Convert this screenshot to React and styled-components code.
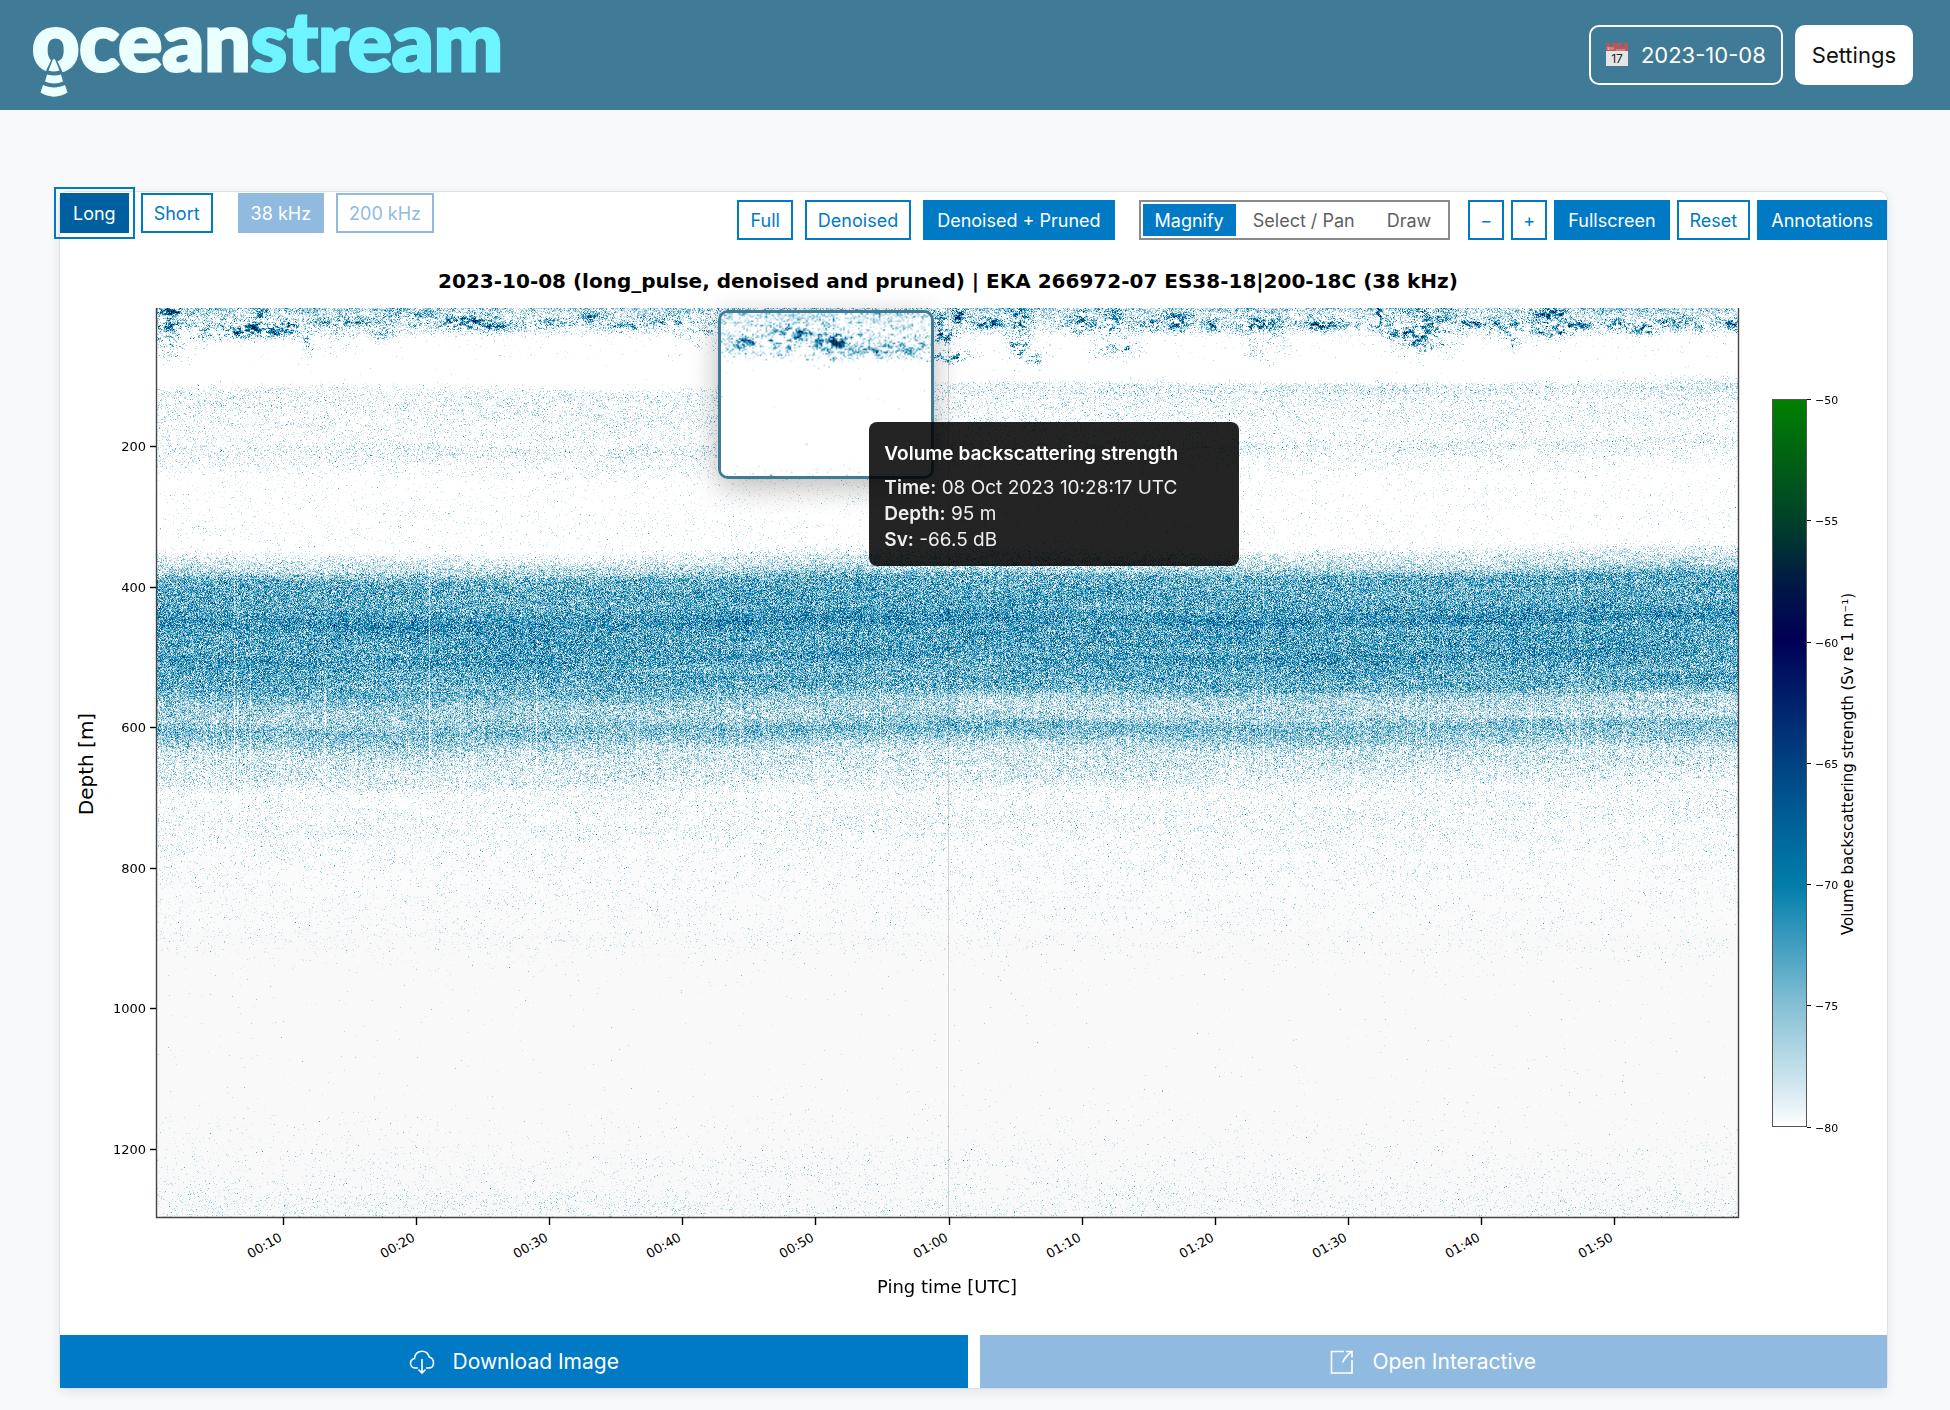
import React, { useEffect, useRef } from "react";
import styled, { createGlobalStyle } from "styled-components";

const COLORS = {
  header: "#3f7a96",
  blue: "#007ac5",
  blueDark: "#005f9e",
  blueLight: "#90badf",
  page: "#f8f9fb",
  grey: "#8a8a8a",
};

// ---------- echogram data ----------

const PLOT = { width: 1582, height: 909 };

const COLOR_STOPS = [
  [0, 255, 255, 255],
  [0.05, 214, 233, 241],
  [0.17, 130, 190, 212],
  [0.25, 64, 158, 192],
  [0.33, 2, 126, 170],
  [0.4, 0, 102, 156],
  [0.5, 0, 66, 130],
  [0.67, 0, 0, 85],
  [0.75, 0, 26, 68],
  [0.83, 0, 64, 42],
  [1, 0, 128, 0],
];

// mean level by depth in plot pixels
const LEVELS = [
  [0, 0.1],
  [6, 0.02],
  [18, -0.05],
  [24, -0.08],
  [32, -0.22],
  [48, -0.24],
  [60, -0.3],
  [70, -0.28],
  [78, -0.08],
  [86, -0.06],
  [110, -0.08],
  [132, -0.1],
  [140, -0.05],
  [152, -0.1],
  [164, -0.12],
  [172, -0.17],
  [210, -0.16],
  [238, -0.17],
  [248, -0.02],
  [262, 0.08],
  [270, 0.2],
  [290, 0.22],
  [300, 0.22],
  [314, 0.29],
  [322, 0.24],
  [342, 0.23],
  [350, 0.26],
  [358, 0.22],
  [382, 0.2],
  [395, 0.12],
  [410, 0.11],
  [420, 0.18],
  [430, 0.14],
  [445, 0.04],
  [470, 0],
  [485, -0.08],
  [520, -0.07],
  [535, -0.11],
  [580, -0.14],
  [640, -0.16],
  [655, -0.22],
  [700, -0.27],
  [780, -0.25],
  [840, -0.17],
  [890, -0.12],
  [909, -0.1],
];

// fish schools near the surface: x, y, half width, half height, strength
const SCHOOLS = [
  [12, 22, 22, 14, 0.3],
  [18, 42, 12, 10, 0.2],
  [16, 3, 9, 3, 0.6],
  [52, 22, 14, 6, 0.36],
  [66, 26, 10, 4, 0.3],
  [96, 21, 32, 6, 0.48],
  [107, 10, 4, 8, 0.42],
  [130, 18, 12, 4, 0.36],
  [150, 34, 4, 12, 0.24],
  [182, 33, 9, 8, 0.2],
  [190, 14, 26, 3, 0.34],
  [226, 22, 9, 8, 0.2],
  [255, 9, 18, 5, 0.24],
  [310, 14, 20, 5, 0.4],
  [338, 18, 16, 4, 0.32],
  [390, 15, 18, 3, 0.3],
  [436, 10, 10, 4, 0.26],
  [470, 18, 20, 3, 0.26],
  [510, 14, 18, 4, 0.3],
  [600, 24, 40, 10, 0.3],
  [700, 22, 30, 8, 0.26],
  [785, 24, 10, 10, 0.42],
  [792, 48, 16, 5, 0.44],
  [803, 8, 5, 8, 0.34],
  [832, 15, 14, 4, 0.42],
  [862, 12, 7, 8, 0.44],
  [862, 38, 9, 12, 0.36],
  [874, 50, 9, 7, 0.44],
  [926, 14, 3, 8, 0.95],
  [926, 17, 14, 5, 0.34],
  [954, 18, 8, 12, 0.36],
  [962, 38, 14, 8, 0.38],
  [990, 16, 14, 4, 0.28],
  [1019, 14, 10, 6, 0.44],
  [1057, 17, 8, 4, 0.4],
  [1103, 17, 14, 7, 0.4],
  [1110, 38, 14, 10, 0.18],
  [1164, 16, 14, 4, 0.44],
  [1190, 18, 26, 2, 0.3],
  [1223, 10, 2, 8, 0.95],
  [1248, 22, 14, 7, 0.44],
  [1266, 26, 20, 14, 0.38],
  [1260, 44, 8, 6, 0.24],
  [1274, 8, 18, 8, 0.24],
  [1318, 15, 22, 3, 0.38],
  [1358, 22, 14, 7, 0.36],
  [1357, 34, 5, 6, 0.32],
  [1396, 20, 14, 7, 0.48],
  [1394, 6, 10, 6, 0.42],
  [1418, 17, 12, 3, 0.44],
  [1462, 17, 10, 4, 0.4],
  [1488, 20, 10, 4, 0.5],
  [1515, 14, 14, 5, 0.38],
  [1548, 18, 10, 3, 0.26],
  [1576, 16, 8, 4, 0.32],
];

const LENS_LEVELS = [
  [0, 0.04],
  [14, -0.04],
  [30, -0.08],
  [44, -0.12],
  [52, -0.24],
  [60, -0.28],
  [90, -0.27],
  [108, -0.32],
  [145, -0.33],
  [154, -0.18],
  [166, -0.14],
];

const LENS_SCHOOLS = [
  [30, 31, 16, 5, 0.36],
  [52, 30, 12, 7, 0.52],
  [62, 20, 9, 5, 0.6],
  [70, 25, 8, 3, 0.5],
  [90, 19, 12, 2, 0.6],
  [100, 27, 7, 9, 0.36],
  [114, 30, 9, 7, 0.5],
  [104, 44, 10, 6, 0.3],
  [137, 26, 8, 4, 0.44],
  [150, 36, 22, 5, 0.3],
  [190, 34, 20, 6, 0.28],
];

function makeRandom(seed) {
  let a = seed;
  return () => {
    a = (a + 0x6d2b79f5) | 0;
    let t = Math.imul(a ^ (a >>> 15), 1 | a);
    t = (t + Math.imul(t ^ (t >>> 7), 61 | t)) ^ t;
    return ((t ^ (t >>> 14)) >>> 0) / 4294967296;
  };
}

function ramp(stops, v) {
  if (v <= stops[0][0]) return stops[0].slice(1);
  for (let i = 1; i < stops.length; i++) {
    if (v <= stops[i][0]) {
      const [a, ...from] = stops[i - 1];
      const [b, ...to] = stops[i];
      const k = (v - a) / (b - a);
      return from.map((f, j) => f + (to[j] - f) * k);
    }
  }
  return stops[stops.length - 1].slice(1);
}

const PALETTE = Array.from({ length: 256 }, (_, i) => ramp(COLOR_STOPS, i / 255));

// smooth 2d noise with cells of cw x ch pixels
function makeBlotches(random, width, height, cw, ch) {
  const cols = Math.ceil(width / cw) + 2;
  const rows = Math.ceil(height / ch) + 2;
  const grid = Array.from({ length: cols * rows }, () => random() * 2 - 1);
  return (x, y) => {
    const gx = Math.floor(x / cw);
    const gy = Math.floor(y / ch);
    const fx = x / cw - gx;
    const fy = y / ch - gy;
    const i = gy * cols + gx;
    const top = grid[i] + (grid[i + 1] - grid[i]) * fx;
    const low = grid[i + cols] + (grid[i + cols + 1] - grid[i + cols]) * fx;
    return top + (low - top) * fy;
  };
}

function paint(canvas, { levels, schools, scale, seed, bands }) {
  const { width, height } = canvas;
  const ctx = canvas.getContext("2d");
  const image = ctx.createImageData(width, height);
  const random = makeRandom(seed);
  const fine = makeBlotches(random, width, height, 3, 2);
  const patch = makeBlotches(random, width, height, 9, 6);
  const wide = makeBlotches(random, width, height, 120, 9);
  const drift = makeBlotches(random, width, height, 220, 400);
  const streaks = Array.from({ length: width }, () => {
    const r = random();
    return r > 0.985 ? 0.12 : r > 0.9 ? 0.05 : random() * 0.02;
  });
  if (bands) {
    streaks[273] = 0.3;
    streaks[78] = 0.2;
    streaks[1287] = 0.14;
  }

  for (let y = 0; y < height; y++) {
    for (let x = 0; x < width; x++) {
      const px = x * scale;
      const py = y * scale;
      // layers rise slightly towards the right
      const slope = bands && py > 60 && py < 600 ? (px / PLOT.width) * 7 - 3 + drift(x, y) * 5 : 0;
      let v = ramp(levels, py + slope)[0];
      let spread = 0.11;
      if (bands) {
        v += wide(x, y) * 0.025;
        if (px > 700 && py > 74 && py < 86) v += 0.04;
        if (px < 700 && py > 136 && py < 150) v += 0.02;
        if (px > 800 && py > 384 && py < 410) v -= 0.03;
        if (py > 250 && py < 650) v -= streaks[x] * (py > 520 ? 0.2 : py > 380 ? 1 : 0.6);
        if (py > 264 && py < 384) spread = 0.13;
      }
      let school = 0;
      if (py < 70) {
        for (const [sx, sy, sw, sh, strength] of schools) {
          const dx = (px - sx) / sw;
          const dy = (py - sy) / sh;
          const d = dx * dx + dy * dy;
          if (d < 5) school = Math.max(school, strength * Math.exp(-d * 0.6));
        }
      }
      if (school > 0.02) {
        v += school * (0.5 + fine(x, y) * 1.1 + patch(x, y) * 0.9);
        spread = 0.16;
      } else if (py < 52) {
        v += fine(x, y) * 0.09;
      }
      v += (random() + random() + random() - 1.5) * 1.9 * spread;
      // stray single echoes
      if (random() > 0.96) v += 0.2 * random();
      const t = Math.max(0, Math.min(1, v));
      const c = PALETTE[Math.round(t * 255)];
      const haze = bands ? Math.max(0, Math.min(6, (py - 430) / 35)) : 0;
      const o = (y * width + x) * 4;
      image.data[o] = Math.min(c[0], 255 - haze);
      image.data[o + 1] = Math.min(c[1], 255 - haze);
      image.data[o + 2] = Math.min(c[2], 255 - haze);
      image.data[o + 3] = 255;
    }
  }
  ctx.putImageData(image, 0, 0);
}

const ECHOGRAM = { levels: LEVELS, schools: SCHOOLS, scale: 1, seed: 38, bands: true };
const MAGNIFIED = { levels: LENS_LEVELS, schools: LENS_SCHOOLS, scale: 1.5, seed: 18, bands: false };

function Echogram({ width, height, options, label }) {
  const ref = useRef(null);
  useEffect(() => {
    paint(ref.current, options);
  }, [options]);
  return <Canvas ref={ref} width={width} height={height} role="img" aria-label={label} />;
}

// ---------- chart ----------

const LEFT = 96;
const TOP = 68;
const RIGHT = LEFT + PLOT.width;
const BOTTOM = TOP + PLOT.height;

const DEPTHS = [200, 400, 600, 800, 1000, 1200];
const TIMES = ["00:10", "00:20", "00:30", "00:40", "00:50", "01:00", "01:10", "01:20", "01:30", "01:40", "01:50"];
const DECIBELS = [-50, -55, -60, -65, -70, -75, -80];

const depthY = d => Math.round(206 + (d - 200) * 0.7025);
const timeX = i => Math.round(223 + i * 133.1);
const decibelY = db => Math.round(159 + (-50 - db) * 24.25);

function Chart() {
  return (
    <ChartSvg viewBox="0 0 1827 1095">
      <defs>
        <linearGradient id="sv" x1="0" y1="1" x2="0" y2="0">
          {COLOR_STOPS.map(([at, r, g, b]) => (
            <stop key={at} offset={at} stopColor={`rgb(${r},${g},${b})`} />
          ))}
        </linearGradient>
      </defs>
      <ChartTitle x="888" y="48">
        2023-10-08 (long_pulse, denoised and pruned) | EKA 266972-07 ES38-18|200-18C (38 kHz)
      </ChartTitle>
      <foreignObject x={LEFT} y={TOP} width={PLOT.width} height={PLOT.height}>
        <Echogram width={PLOT.width} height={PLOT.height} options={ECHOGRAM} label="Echogram" />
      </foreignObject>
      <path d={`M888.5 ${TOP}V${BOTTOM}`} stroke="#000" strokeOpacity="0.14" />
      <path d={`M${LEFT + 0.5} ${TOP}V${BOTTOM + 0.5}H${RIGHT + 0.5}V${TOP}`} fill="none" stroke="#444" strokeWidth="1.4" />

      {DEPTHS.map(d => (
        <g key={d}>
          <path d={`M${LEFT - 6} ${depthY(d) + 0.5}H${LEFT}`} stroke="#000" strokeWidth="1.4" />
          <TickText x={LEFT - 10} y={depthY(d) + 5} $anchor="end">
            {d}
          </TickText>
        </g>
      ))}
      {TIMES.map((t, i) => (
        <g key={t}>
          <path d={`M${timeX(i) + 0.5} ${BOTTOM}v8`} stroke="#000" strokeWidth="1.4" />
          <TickText $anchor="end" transform={`translate(${timeX(i)} ${BOTTOM + 23}) rotate(-30)`}>
            {t}
          </TickText>
        </g>
      ))}
      <AxisText $size={20} transform="translate(33 524) rotate(-90)">
        Depth [m]
      </AxisText>
      <AxisText $size={18} x="887" y="1053">
        Ping time [UTC]
      </AxisText>

      <rect x="1712.5" y="159.5" width="34" height="727" fill="url(#sv)" stroke="#555" />
      {DECIBELS.map(db => (
        <g key={db}>
          <path d={`M1747 ${decibelY(db) + 0.5}h4`} stroke="#000" />
          <TickText $size={11} x="1755" y={decibelY(db) + 5}>
            {`−${-db}`}
          </TickText>
        </g>
      ))}
      <AxisText $size={15} transform="translate(1793 524) rotate(-90)">
        Volume backscattering strength (Sv re 1 m⁻¹)
      </AxisText>
    </ChartSvg>
  );
}

// ---------- icons ----------

const CalendarIcon = () => (
  <svg width="22" height="24" viewBox="0 0 22 24" aria-hidden="true">
    <path d="M0 1h22v22H0z" fill="#e4e6e6" />
    <path d="M0 0h22v8H0z" fill="#b9585a" />
    <path d="M2 7V4l1 3V4M5 4v3M7 4v3M10 7h9" stroke="#dba6a6" fill="none" />
    <circle cx="5" cy="2" r="1.4" fill="#3f7a96" />
    <circle cx="17" cy="2" r="1.4" fill="#3f7a96" />
    <text x="11" y="20" textAnchor="middle" fontFamily="Inter, sans-serif" fontSize="12" fill="#222">
      17
    </text>
  </svg>
);

const CloudIcon = () => (
  <svg width="26" height="26" viewBox="0 0 26 26" fill="none" stroke="#fff" strokeWidth="1.6" aria-hidden="true">
    <path d="M9 19H6.500C3.500 19 1.500 17 1.500 14.300c0-2.500 1.500-4.200 4-4.800C6 5 9 2.200 13 2.200c3.800 0 6.300 2.300 7.200 5.800 2.700.8 4.300 3 4.300 5.700 0 3.200-2 5.300-5 5.300H17" />
    <path d="M13 10v14M9.500 20.500L13 24l3.500-3.500" />
  </svg>
);

const OpenIcon = () => (
  <svg width="24" height="26" viewBox="0 0 24 26" fill="none" stroke="#fff" strokeWidth="1.6" aria-hidden="true">
    <path d="M14 2.500H1.500v21.500h20.500V11" />
    <path d="M16 2.500h6v6M21.500 3C17.500 5.500 15 8.500 12.500 13.500" />
  </svg>
);

const Beacon = () => (
  <BeaconSvg viewBox="0 0 34 44" aria-hidden="true">
    <path d="M17 0L8 19h18z" fill={COLORS.header} />
    <path d="M17 5c1 0 1.300.7 1.700 2L22.500 16.500c-3.500 1.300-7.500 1.300-11 0L15.300 7C15.700 5.700 16 5 17 5z" />
    <path d="M10 20.500c4.500 1.400 9.500 1.400 14 0l2 7c-5.500 2.500-12.500 2.500-18 0z" />
    <path d="M6 31c7 3.300 15 3.300 22 0l2.500 7.500c-8 5.500-19 5.500-27 0z" />
  </BeaconSvg>
);

export default function App() {
  return (
    <>
      <GlobalStyle />
      <Header>
        <Logo href="#" aria-label="oceanstream">
          <span>ocean</span>
          <LogoAccent>stream</LogoAccent>
          <Beacon />
        </Logo>
        <HeaderActions>
          <HeaderButton $outlined>
            <CalendarIcon />
            2023-10-08
          </HeaderButton>
          <HeaderButton>Settings</HeaderButton>
        </HeaderActions>
      </Header>
      <Main>
        <Panel>
          <Toolbar>
            <Group $gap={12}>
              <ToolButton $variant="active">Long</ToolButton>
              <ToolButton>Short</ToolButton>
              <Spacer />
              <ToolButton $variant="mutedFilled" disabled>
                38 kHz
              </ToolButton>
              <ToolButton $variant="muted" disabled>
                200 kHz
              </ToolButton>
            </Group>
            <RightTools>
              <Group $gap={12}>
                <ToolButton>Full</ToolButton>
                <ToolButton>Denoised</ToolButton>
                <ToolButton $variant="filled">Denoised + Pruned</ToolButton>
              </Group>
              <Segments>
                <Segment $active>Magnify</Segment>
                <Segment>Select / Pan</Segment>
                <Segment>Draw</Segment>
              </Segments>
              <Group $gap={7}>
                <ZoomButton aria-label="Zoom out">−</ZoomButton>
                <ZoomButton aria-label="Zoom in">+</ZoomButton>
                <ToolButton $variant="filled">Fullscreen</ToolButton>
                <ToolButton>Reset</ToolButton>
                <ToolButton $variant="filled">Annotations</ToolButton>
              </Group>
            </RightTools>
          </Toolbar>
          <ChartArea>
            <Chart />
            <Lens>
              <Echogram width={141} height={110} options={MAGNIFIED} label="Magnified echogram" />
            </Lens>
            <Tooltip role="tooltip">
              <TooltipTitle>Volume backscattering strength</TooltipTitle>
              <div>
                <b>Time:</b> 08 Oct 2023 10:28:17 UTC
              </div>
              <div>
                <b>Depth:</b> 95 m
              </div>
              <div>
                <b>Sv:</b> -66.5 dB
              </div>
            </Tooltip>
          </ChartArea>
          <Footer>
            <FooterButton>
              <CloudIcon />
              Download Image
            </FooterButton>
            <FooterButton disabled>
              <OpenIcon />
              Open Interactive
            </FooterButton>
          </Footer>
        </Panel>
      </Main>
    </>
  );
}

const GlobalStyle = createGlobalStyle`
  * {
    box-sizing: border-box;
  }

  body {
    margin: 0;
    background: ${COLORS.page};
    font-family: Inter, "Liberation Sans", sans-serif;
  }

  button {
    font-family: inherit;
    cursor: pointer;
  }
`;

const Header = styled.header`
  display: flex;
  align-items: center;
  justify-content: space-between;
  height: 110px;
  padding: 0 37px 0 32px;
  background: ${COLORS.header};
`;

const Logo = styled.a`
  position: relative;
  align-self: flex-start;
  font-family: Lato, sans-serif;
  font-size: 82px;
  font-weight: 900;
  line-height: 78px;
  color: #ebffff;
  text-decoration: none;
  -webkit-text-stroke: 3px currentColor;
`;

const LogoAccent = styled.span`
  color: #6df4ff;
`;

const BeaconSvg = styled.svg`
  position: absolute;
  left: 5px;
  top: 54px;
  width: 34px;
  height: 44px;
  fill: #ebffff;
`;

const HeaderActions = styled.div`
  display: flex;
  gap: 12px;
`;

const HeaderButton = styled.button`
  display: flex;
  align-items: center;
  gap: 13px;
  height: 60px;
  padding: 0 15px;
  border: 2px solid #fff;
  border-radius: 10px;
  background: ${props => (props.$outlined ? "transparent" : "#fff")};
  color: ${props => (props.$outlined ? "#fff" : "#111")};
  font-size: 22px;
`;

const Main = styled.main`
  padding: 81px 62px 22px 59px;
`;

const Panel = styled.section`
  border: 1px solid #dedfe1;
  border-radius: 8px;
  background: #fff;
  box-shadow: 0 4px 12px rgba(0, 0, 0, 0.08);
`;

const Toolbar = styled.div`
  display: flex;
  align-items: flex-start;
  justify-content: space-between;
  padding-top: 1px;
`;

const Group = styled.div`
  display: flex;
  gap: ${props => props.$gap}px;
`;

const Spacer = styled.span`
  width: 1px;
`;

const RightTools = styled.div`
  display: flex;
  gap: 18px;
  margin-top: 7px;
`;

const VARIANTS = {
  outline: ["#fff", COLORS.blue, COLORS.blue],
  filled: [COLORS.blue, COLORS.blue, "#fff"],
  active: [COLORS.blueDark, COLORS.blueDark, "#fff"],
  muted: ["#fff", COLORS.blueLight, COLORS.blueLight],
  mutedFilled: [COLORS.blueLight, COLORS.blueLight, "#fff"],
};

const variant = part => props => VARIANTS[props.$variant || "outline"][part];

const ToolButton = styled.button`
  height: 40px;
  padding: 0 ${props => (props.$variant === "filled" ? 12 : 11)}px;
  border: 2px solid ${variant(1)};
  background: ${variant(0)};
  color: ${variant(2)};
  font-size: 18px;
  outline: ${props => (props.$variant === "active" ? `2px solid ${COLORS.blue}` : "none")};
  outline-offset: 4px;
`;

const ZoomButton = styled(ToolButton)`
  width: 36px;
  padding: 0;
`;

const Segments = styled.div`
  display: flex;
  gap: 2px;
  height: 40px;
  margin-left: 6px;
  padding: 2px;
  border: 2px solid ${COLORS.grey};
`;

const Segment = styled.button`
  padding: 0 ${props => (props.$active ? 12 : 15)}px;
  border: 0;
  background: ${props => (props.$active ? COLORS.blue : "transparent")};
  color: ${props => (props.$active ? "#fff" : "#5f5f5f")};
  font-size: 18px;
`;

const ChartArea = styled.div`
  position: relative;
`;

const ChartSvg = styled.svg`
  display: block;
  width: 100%;
  height: auto;
  font-family: "DejaVu Sans", sans-serif;
`;

const ChartTitle = styled.text`
  font-size: 20px;
  font-weight: bold;
  text-anchor: middle;
`;

const TickText = styled.text`
  font-size: ${props => props.$size || 13}px;
  text-anchor: ${props => props.$anchor || "start"};
`;

const AxisText = styled.text`
  font-size: ${props => props.$size}px;
  text-anchor: middle;
`;

const Canvas = styled.canvas`
  display: block;
  width: 100%;
  height: 100%;
`;

const Lens = styled.div`
  position: absolute;
  left: 36%;
  top: 6.4%;
  width: 216px;
  height: 169px;
  overflow: hidden;
  border: 3px solid ${COLORS.header};
  border-radius: 10px;
  background: #fff;
  box-shadow: 0 8px 30px rgba(0, 0, 0, 0.28);
`;

const Tooltip = styled.div`
  position: absolute;
  left: 44.3%;
  top: 16.6%;
  width: 370px;
  padding: 19px 15px 13px;
  border-radius: 8px;
  background: rgba(0, 0, 0, 0.86);
  color: #eee;
  font-size: 19px;
  line-height: 26px;

  b {
    font-weight: 600;
  }
`;

const TooltipTitle = styled.div`
  margin-bottom: 8px;
  color: #fff;
  font-weight: 600;
`;

const Footer = styled.div`
  display: flex;
  gap: 12px;
`;

const FooterButton = styled.button`
  display: flex;
  flex: 1;
  align-items: center;
  justify-content: center;
  gap: 18px;
  height: 53px;
  border: 0;
  background: ${COLORS.blue};
  color: #fff;
  font-size: 21px;

  &:disabled {
    background: ${COLORS.blueLight};
  }
`;
